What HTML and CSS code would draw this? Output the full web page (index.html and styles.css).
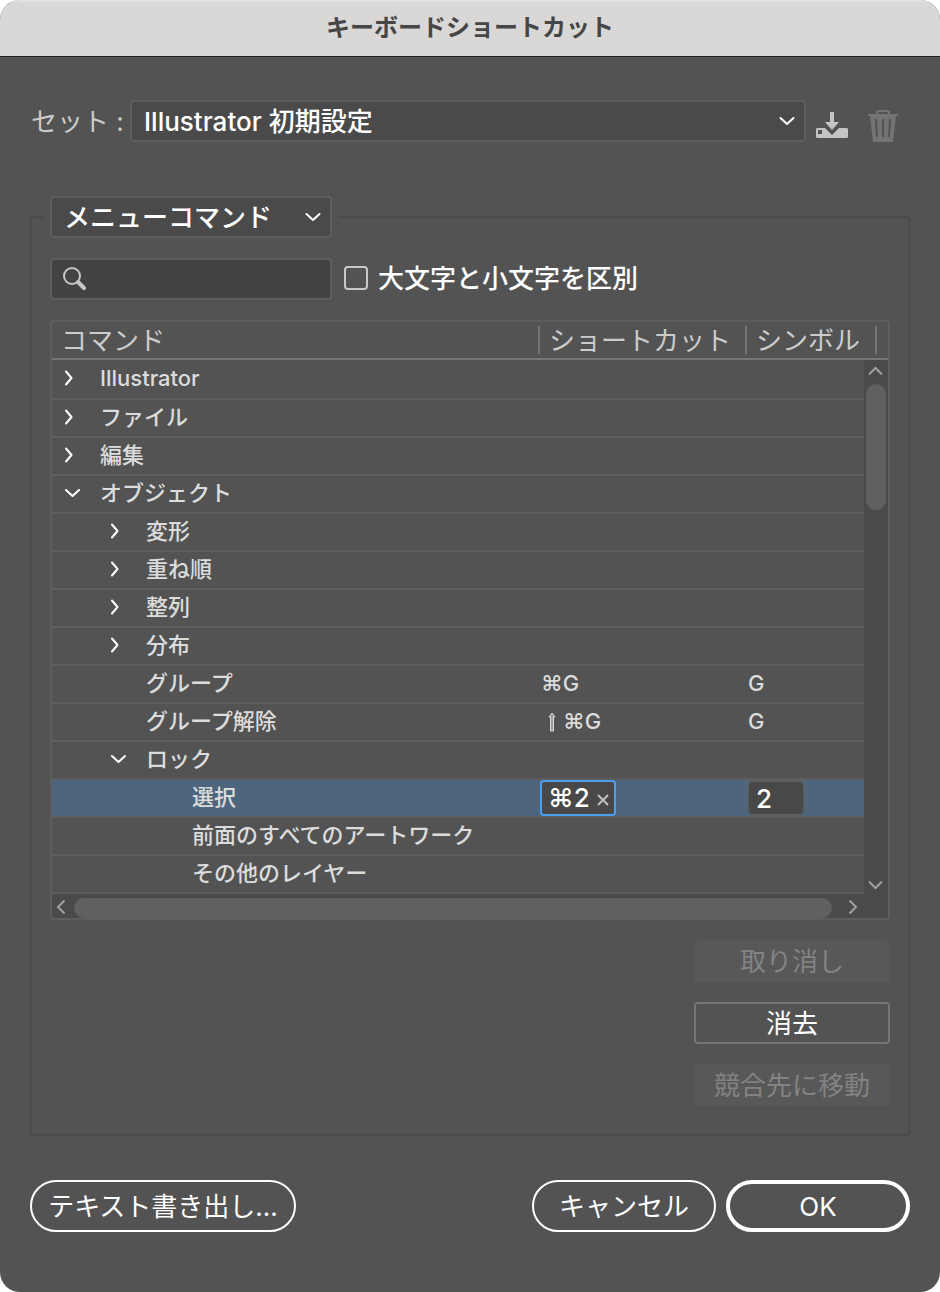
FILE: index.html
```html
<!DOCTYPE html>
<html lang="ja">
<head>
    <meta charset="UTF-8">
    <meta name="viewport" content="width=device-width, initial-scale=1.0">
    <title>キーボードショートカット</title>
    <link rel="stylesheet" href="styles.css">
</head>
<body>
    <div class="dialog">
        <header class="title-bar">
            <h1>キーボードショートカット</h1>
        </header>

        <main class="content">
            <div class="set-row">
                <label for="keySet">セット :</label>
                <div class="select-wrap set-select">
                    <select id="keySet">
                        <option>Illustrator 初期設定</option>
                    </select>
                    <svg class="chevron" width="16" height="10" viewBox="0 0 16 10"><path d="M1.5 2 8 8l6.5-6"/></svg>
                </div>
                <button class="icon-btn save-btn" aria-label="保存">
                    <svg width="32" height="28" viewBox="0 0 32 28">
                        <path fill="#c4c4c4" d="M14 0h4v10h5l-7 8-7-8h5z"/>
                        <path fill="#c4c4c4" fill-rule="evenodd" d="M1 16h8l7 7 7-7h8l1 1v8l-1 1H1l-1-1v-8zM2 18v4h4v-4z"/>
                    </svg>
                </button>
                <button class="icon-btn" aria-label="削除" disabled>
                    <svg width="30" height="32" viewBox="0 0 30 32">
                        <path fill="none" stroke="#737373" stroke-width="2" d="M9 5V2l1-1h10l1 1v3"/>
                        <path fill="#737373" fill-rule="evenodd" d="M0 4h30v2h-2l-3 26H5L2 6H0zM7 9l1 18h2L9 9zM14 9v18h2V9zM21 9l-1 18h2l1-18z"/>
                    </svg>
                </button>
            </div>

            <fieldset class="panel">
                <legend>
                    <div class="select-wrap">
                        <select id="commandType" aria-label="コマンドの種類">
                            <option>メニューコマンド</option>
                            <option>ツール</option>
                        </select>
                        <svg class="chevron" width="16" height="10" viewBox="0 0 16 10"><path d="M1.5 2 8 8l6.5-6"/></svg>
                    </div>
                </legend>

                <div class="search-row">
                    <div class="search-box">
                        <svg width="26" height="24" viewBox="0 0 26 24">
                            <circle cx="10" cy="9" r="8" fill="none" stroke="#c8c8c8" stroke-width="2"/>
                            <path d="m16 15 6 6" stroke="#c8c8c8" stroke-width="4" stroke-linecap="round"/>
                        </svg>
                        <input type="text" id="search" aria-label="検索">
                    </div>
                    <input type="checkbox" id="matchCase">
                    <label for="matchCase">大文字と小文字を区別</label>
                </div>

                <div class="command-list">
                    <table>
                        <colgroup>
                            <col>
                            <col class="col-shortcut">
                            <col class="col-symbol">
                            <col class="col-end">
                        </colgroup>
                        <thead>
                            <tr><th>コマンド</th><th>ショートカット</th><th>シンボル</th><td></td></tr>
                        </thead>
                        <tbody id="commandRows"></tbody>
                    </table>
                    <div class="scroll-y">
                        <svg class="arrow" width="16" height="10" viewBox="0 0 16 10"><path d="M1 8.5 7.5 2 14 8.5"/></svg>
                        <div class="thumb"></div>
                        <svg class="arrow" width="16" height="10" viewBox="0 0 16 10"><path d="M1 1.5 7.5 8 14 1.5"/></svg>
                    </div>
                    <div class="scroll-x">
                        <svg class="arrow" width="10" height="16" viewBox="0 0 10 16"><path d="M8.5.5 2 7l6.500 6.500"/></svg>
                        <div class="thumb"></div>
                        <svg class="arrow" width="10" height="16" viewBox="0 0 10 16"><path d="M1.500.5 8 7l-6.500 6.500"/></svg>
                    </div>
                </div>

                <div class="side-actions">
                    <button disabled>取り消し</button>
                    <button>消去</button>
                    <button disabled>競合先に移動</button>
                </div>
            </fieldset>

            <footer class="footer">
                <button class="export-btn">テキスト書き出し...</button>
                <button class="cancel-btn">キャンセル</button>
                <button class="ok-btn">OK</button>
            </footer>
        </main>
    </div>

    <script>
        const shiftKey = '<svg class="shift" width="22" height="22" viewBox="0 0 22 22" role="img" aria-label="Shift"><path d="M9.5 19V5H8l3-4 3 4h-1.500v14z"/></svg>';

        const commands = [
            { name: 'Illustrator', level: 0, state: 'closed' },
            { name: 'ファイル', level: 0, state: 'closed' },
            { name: '編集', level: 0, state: 'closed' },
            { name: 'オブジェクト', level: 0, state: 'open' },
            { name: '変形', level: 1, state: 'closed' },
            { name: '重ね順', level: 1, state: 'closed' },
            { name: '整列', level: 1, state: 'closed' },
            { name: '分布', level: 1, state: 'closed' },
            { name: 'グループ', level: 1, keys: '⌘G', symbol: 'G' },
            { name: 'グループ解除', level: 1, keys: shiftKey + '⌘G', symbol: 'G' },
            { name: 'ロック', level: 1, state: 'open' },
            { name: '選択', level: 2, keys: '⌘2', symbol: '2', selected: true },
            { name: '前面のすべてのアートワーク', level: 2 },
            { name: 'その他のレイヤー', level: 2 }
        ];

        const toggleIcons = {
            closed: '<svg width="16" height="16" viewBox="0 0 16 16"><path d="M2 1.5 7.5 8 2 14.5"/></svg>',
            open: '<svg width="16" height="16" viewBox="0 0 16 16"><path d="M2 5l6.5 6L15 5"/></svg>'
        };

        function renderToggle(command) {
            if (!command.state) {
                return '<span class="toggle"></span>';
            }
            return `<button class="toggle" aria-label="${command.name}" aria-expanded="${command.state === 'open'}">${toggleIcons[command.state]}</button>`;
        }

        function renderKeys(command) {
            if (!command.selected) {
                return command.keys || '';
            }
            return `
                <div class="key-edit">
                    <input type="text" value="${command.keys}" aria-label="ショートカット">
                    <button aria-label="クリア"><svg width="12" height="12" viewBox="0 0 12 12"><path d="m1 1 10 10M11 1 1 11"/></svg></button>
                </div>`;
        }

        function renderSymbol(command) {
            if (!command.selected) {
                return command.symbol || '';
            }
            return `<input class="symbol-edit" type="text" value="${command.symbol}" aria-label="シンボル">`;
        }

        document.getElementById('commandRows').innerHTML = commands.map(command => `
            <tr class="${command.selected ? 'selected' : ''}">
                <td><div class="name level-${command.level}">${renderToggle(command)}${command.name}</div></td>
                <td>${renderKeys(command)}</td>
                <td>${renderSymbol(command)}</td>
                <td></td>
            </tr>
        `).join('');
    </script>
</body>
</html>
```
FILE: styles.css
```css
* {
    box-sizing: border-box;
}

body {
    margin: 0;
    background: #fff;
    color: #fff;
    font-family: Inter, "Noto Sans CJK JP", sans-serif;
    font-size: 26px;
    line-height: 36px;
}

button,
input,
select {
    margin: 0;
    font: inherit;
    color: inherit;
}

button {
    padding: 0;
    background: none;
    border: none;
}

svg {
    display: block;
}

.dialog {
    display: flex;
    flex-direction: column;
    min-height: 100vh;
    background: #535353;
    border-radius: 20px;
    overflow: hidden;
}

.title-bar {
    height: 57px;
    padding-top: 10px;
    background: #d9d8d6;
    border-bottom: 1px solid #222;
    box-shadow: inset 0 2px 0 #e4e3e1;
    text-align: center;
}

.title-bar h1 {
    margin: 0;
    font-size: 24px;
    line-height: 36px;
    color: #464646;
}

.content {
    padding: 43px 30px 60px;
}

/* Set selector */
.set-row {
    display: flex;
    align-items: center;
    margin-bottom: 54px;
    padding-right: 12px;
}

.set-row label {
    width: 100px;
    padding: 2px 0 0 1px;
    color: #ccc;
    white-space: nowrap;
}

.select-wrap {
    position: relative;
}

.set-select {
    flex: 1;
}

.select-wrap select {
    display: block;
    width: 100%;
    height: 42px;
    padding: 2px 40px 0 12px;
    appearance: none;
    background: #4a4a4a;
    border: 2px solid #5e5e5e;
    border-radius: 4px;
    font-weight: 500;
}

.chevron {
    position: absolute;
    top: 16px;
    right: 11px;
    pointer-events: none;
}

.chevron path,
.toggle path {
    fill: none;
    stroke: #fff;
    stroke-width: 2;
    stroke-linecap: round;
    stroke-linejoin: round;
}

.icon-btn {
    margin-left: 20px;
    padding-top: 10px;
}

.save-btn {
    margin-left: 10px;
}

/* Command panel */
.panel {
    min-width: 0;
    margin: 0 0 44px;
    padding: 20px 18px 28px;
    border: 2px solid #4b4b4b;
    border-radius: 4px;
}

.panel legend {
    width: 294px;
    margin-left: -6px;
    padding: 0 6px;
}

.search-row {
    display: flex;
    align-items: center;
    margin-bottom: 20px;
    font-weight: 500;
}

.search-box {
    display: flex;
    align-items: center;
    width: 282px;
    height: 42px;
    padding: 0 10px;
    background: #434343;
    border: 2px solid #5e5e5e;
    border-radius: 4px;
}

.search-box input {
    flex: 1;
    min-width: 0;
    background: none;
    border: none;
    outline: none;
}

.search-row input[type="checkbox"] {
    width: 24px;
    height: 24px;
    margin: 0 10px 2px 12px;
    appearance: none;
    border: 2px solid #c8c8c8;
    border-radius: 4px;
}

.command-list {
    position: relative;
    border: 2px solid #5e5e5e;
    border-radius: 4px;
    overflow: hidden;
}

table {
    width: 100%;
    table-layout: fixed;
    border-collapse: separate;
    border-spacing: 0;
    font-size: 22px;
    font-weight: 500;
    line-height: 34px;
    color: #dcdcdc;
}

.col-shortcut {
    width: 207px;
}

.col-symbol {
    width: 130px;
}

.col-end {
    width: 11px;
}

thead tr {
    height: 38px;
}

th,
thead td {
    padding: 2px 9px 0;
    border-bottom: 2px solid #767676;
    background: linear-gradient(#767676, #767676) right 4px / 2px 28px no-repeat;
    font-size: 26px;
    font-weight: normal;
    text-align: left;
    color: #ccc;
    white-space: nowrap;
}

thead td {
    padding: 0;
    background: none;
}

tbody tr {
    height: 38px;
}

tbody tr:first-child {
    height: 40px;
}

tbody td {
    padding: 0 1px 2px;
    border-bottom: 2px solid #5e5e5e;
    white-space: nowrap;
}

tbody td:first-child {
    padding-left: 0;
}

.selected {
    background: #4d667e;
}

.name {
    display: flex;
    align-items: center;
}

.level-1 {
    padding-left: 46px;
}

.level-2 {
    padding-left: 92px;
}

.toggle {
    width: 48px;
    padding-left: 12px;
}

.shift {
    display: inline-block;
    vertical-align: middle;
    fill: #999;
    stroke: #dcdcdc;
}

.selected td:nth-child(2),
.selected td:nth-child(3) {
    padding: 0;
}

.key-edit {
    display: flex;
    align-items: center;
    width: 76px;
    height: 36px;
    padding: 0 5px 0 6px;
    background: #484848;
    border: 2px solid #4b9ff0;
    border-radius: 4px;
    color: #fff;
    font-size: 26px;
}

.key-edit input {
    flex: 1;
    min-width: 0;
    height: 32px;
    padding: 0;
    background: none;
    border: none;
    outline: none;
}

.key-edit button {
    padding-top: 4px;
}

.key-edit path {
    stroke: #c0c0c0;
    stroke-width: 2;
}

.symbol-edit {
    display: block;
    width: 58px;
    height: 36px;
    padding: 0 7px;
    background: #484848;
    border: 2px solid #5a5f64;
    border-radius: 6px;
    color: #fff;
    font-size: 26px;
}

.arrow path {
    fill: none;
    stroke: #a0a0a0;
    stroke-width: 2;
}

.thumb {
    background: #606060;
    border-radius: 10px;
}

.scroll-y {
    position: absolute;
    top: 38px;
    right: 0;
    bottom: 24px;
    width: 24px;
    display: flex;
    flex-direction: column;
    align-items: center;
    padding: 6px 0 4px;
    background: #4a4a4a;
}

.scroll-y .thumb {
    width: 20px;
    height: 126px;
    margin: 8px 0 auto;
}

.scroll-x {
    display: flex;
    align-items: center;
    height: 24px;
    padding: 4px 30px 0 4px;
    background: #4a4a4a;
}

.scroll-x .thumb {
    flex: 1;
    height: 20px;
    margin: 0 16px 0 8px;
}

.side-actions {
    display: flex;
    flex-direction: column;
    align-items: flex-end;
    gap: 20px;
    margin-top: 20px;
}

.side-actions button {
    width: 196px;
    height: 42px;
    padding-top: 2px;
    border: 2px solid #767676;
    border-radius: 4px;
}

.side-actions button:disabled {
    background: #585858;
    border-color: #585858;
    color: #838383;
}

/* Dialog buttons */
.footer {
    display: flex;
    gap: 10px;
}

.footer button {
    width: 184px;
    height: 52px;
    padding-top: 2px;
    border: 2px solid #fff;
    border-radius: 26px;
}

.footer .export-btn {
    width: 266px;
    margin-right: auto;
}

.footer .ok-btn {
    border-width: 4px;
}
```
